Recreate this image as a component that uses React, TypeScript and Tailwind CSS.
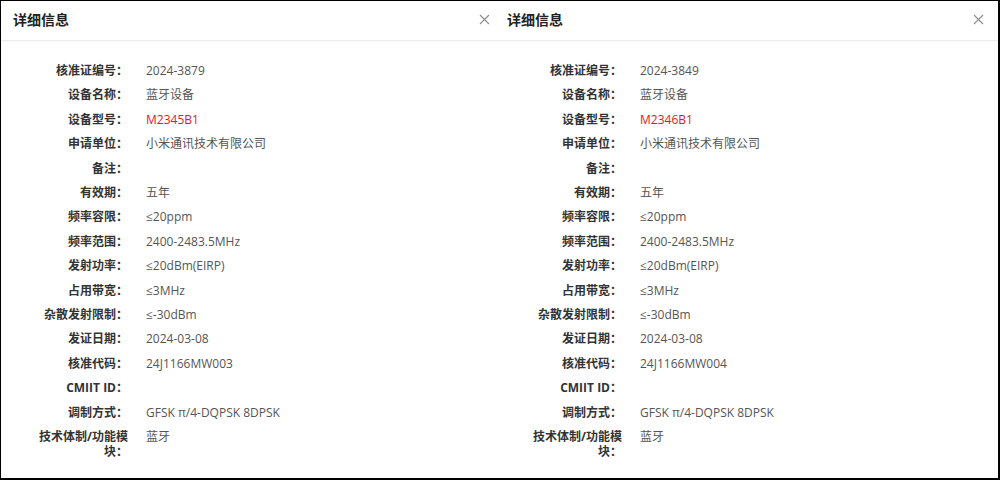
import React from "react";

type Row = { label: string; value: string; red?: boolean };

const makeRows = (num: string, model: string, code: string): Row[] => [
  { label: "核准证编号：", value: num },
  { label: "设备名称：", value: "蓝牙设备" },
  { label: "设备型号：", value: model, red: true },
  { label: "申请单位：", value: "小米通讯技术有限公司" },
  { label: "备注：", value: "" },
  { label: "有效期：", value: "五年" },
  { label: "频率容限：", value: "≤20ppm" },
  { label: "频率范围：", value: "2400-2483.5MHz" },
  { label: "发射功率：", value: "≤20dBm(EIRP)" },
  { label: "占用带宽：", value: "≤3MHz" },
  { label: "杂散发射限制：", value: "≤-30dBm" },
  { label: "发证日期：", value: "2024-03-08" },
  { label: "核准代码：", value: code },
  { label: "CMIIT ID：", value: "" },
  { label: "调制方式：", value: "GFSK π/4-DQPSK 8DPSK" },
  { label: "技术体制/功能模块：", value: "蓝牙" },
];

function CloseIcon() {
  return (
    <svg width="11" height="11" viewBox="0 0 11 11" className="shrink-0">
      <path d="M1 1 L10 10 M10 1 L1 10" stroke="#8c8c8c" strokeWidth="1.1" fill="none" />
    </svg>
  );
}

function Panel({ rows, width, closePad }: { rows: Row[]; width: string; closePad: string }) {
  return (
    <div className={`flex flex-col ${width}`}>
      <div className={`flex h-[40px] items-center justify-between pb-[4px] pl-[12px] ${closePad}`}>
        <span className="text-[14px] font-bold text-[#222]">详细信息</span>
        <CloseIcon />
      </div>
      <div className="flex flex-col pt-[18px] pl-[27px]">
        {rows.map((r, i) => (
          <div key={i} className="flex py-[5px] text-[12px] leading-[14.4px]">
            <div className="w-[100px] shrink-0 text-right font-bold text-[#333]">{r.label}</div>
            <div className={`ml-[18px] ${r.red ? "text-[#e3191b]" : "text-[#555]"}`}>{r.value}</div>
          </div>
        ))}
      </div>
    </div>
  );
}

export default function App() {
  return (
    <div
      className="h-[480px] w-[1000px] overflow-hidden border-t border-l border-r-2 border-b-2 border-black bg-white"
      style={{ fontFamily: "'Open Sans', 'Noto Sans CJK SC', sans-serif" }}
    >
      <div className="relative flex">
        <div className="absolute left-0 right-0 top-[39px] h-px bg-[#ececec] shadow-[0_1px_2px_rgba(0,0,0,0.04)]" />
        <Panel rows={makeRows("2024-3879", "M2345B1", "24J1166MW003")} width="w-[494px]" closePad="pr-[5px]" />
        <Panel rows={makeRows("2024-3849", "M2346B1", "24J1166MW004")} width="w-[503px]" closePad="pr-[14px]" />
      </div>
    </div>
  );
}
